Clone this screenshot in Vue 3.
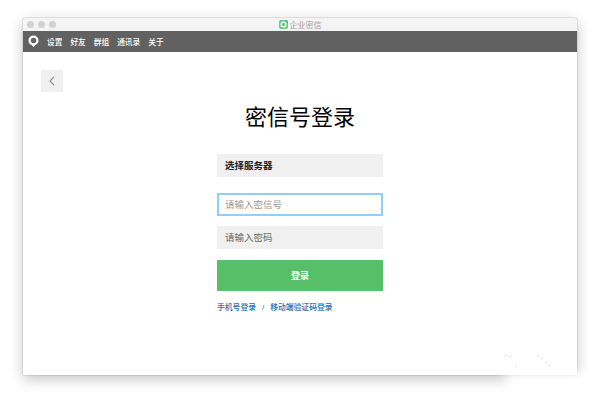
<script setup>
const menus = ["设置", "好友", "群组", "通讯录", "关于"];
const specks = [
  { left: "505px", top: "355px" },
  { left: "509px", top: "356px" },
  { left: "515px", top: "366px" },
  { left: "537px", top: "355px" },
  { left: "541px", top: "358px" },
  { left: "545px", top: "362px" },
  { left: "548px", top: "365px" },
];
</script>

<template>
  <div class="page">
    <div class="window">
      <div class="titlebar">
        <div class="lights">
          <span class="light"></span>
          <span class="light"></span>
          <span class="light"></span>
        </div>
        <div class="app-title">
          <svg class="app-icon" width="9" height="9" viewBox="0 0 9 9">
            <rect width="9" height="9" rx="2" fill="#5fcf7c" />
            <path d="M6 0h1a2 2 0 0 1 2 2v2z" fill="#4fa8e8" />
            <circle cx="4.5" cy="4.5" r="2.4" fill="none" stroke="#fff" stroke-width="1.3" />
          </svg>
          <span>企业密信</span>
        </div>
      </div>
      <div class="menubar">
        <svg class="logo" width="11" height="13" viewBox="0 0 11 13">
          <circle cx="5.5" cy="5.5" r="3.9" fill="none" stroke="#fff" stroke-width="2.2" />
          <path d="M3.6 9.5h3.8L5.5 12.2z" fill="#fff" />
        </svg>
        <span v-for="m in menus" :key="m" class="menu">{{ m }}</span>
      </div>
      <div class="content">
        <div class="back">
          <svg width="6" height="10" viewBox="0 0 6 10">
            <path d="M5 .8 1 5l4 4.2" fill="none" stroke="#8a8a8a" stroke-width="1.1" />
          </svg>
        </div>
        <div class="form">
          <h1 class="title">密信号登录</h1>
          <div class="field select">选择服务器</div>
          <input class="field input" type="text" placeholder="请输入密信号" />
          <input class="field password" type="text" placeholder="请输入密码" />
          <button class="submit">登录</button>
          <div class="links">
            <a>手机号登录</a>
            <span class="sep">/</span>
            <a>移动端验证码登录</a>
          </div>
        </div>
      </div>
    </div>
    <div class="watermark"></div>
    <span v-for="(s, i) in specks" :key="i" class="speck" :style="s"></span>
  </div>
</template>

<style scoped>
.page {
  position: relative;
  width: 600px;
  height: 402px;
  padding: 18px 23px 27px;
  box-sizing: border-box;
  background: #fff;
  overflow: hidden;
  font-family: "Liberation Sans", "Noto Sans CJK SC", sans-serif;
}

.window {
  height: 100%;
  display: flex;
  flex-direction: column;
  background: #fff;
  border-radius: 3px 3px 0 0;
  box-shadow: 0 0 1px rgba(0, 0, 0, 0.75), 0 4px 14px rgba(0, 0, 0, 0.24);
}

.titlebar {
  height: 13px;
  flex: none;
  display: flex;
  align-items: center;
  justify-content: center;
  position: relative;
  background: #f4f4f4;
  border-radius: 3px 3px 0 0;
}

.lights {
  position: absolute;
  left: 4px;
  top: 3px;
  display: flex;
  gap: 4px;
}

.light {
  width: 7px;
  height: 7px;
  border-radius: 50%;
  background: #d2d2d2;
}

.app-title {
  display: flex;
  align-items: center;
  gap: 2px;
  font-size: 8px;
  color: #a0a0a0;
}

.menubar {
  height: 21px;
  flex: none;
  display: flex;
  align-items: center;
  padding-left: 5px;
  background: #616161;
  color: #fff;
  font-size: 7.7px;
  font-weight: 500;
  gap: 8px;
}

.logo {
  margin-right: 0;
}

.content {
  flex: 1;
  padding: 18px 18px 0;
}

.back {
  width: 22px;
  height: 22px;
  display: flex;
  align-items: center;
  justify-content: center;
  background: #f0f0f0;
}

.form {
  width: 166px;
  margin: 13px auto 0 176px;
  display: flex;
  flex-direction: column;
}

.title {
  margin: 0 -20px;
  height: 26px;
  line-height: 26px;
  font-size: 22px;
  font-weight: 400;
  text-align: center;
  color: #000;
}

.field {
  box-sizing: border-box;
  width: 100%;
  border: none;
  outline: none;
  padding: 0 8px;
  font-family: inherit;
  font-size: 9.5px;
  border-radius: 0;
}

.select {
  height: 23px;
  margin-top: 23px;
  line-height: 23px;
  background: #f0f0f0;
  color: #222;
  font-weight: 700;
}

.input {
  height: 23px;
  margin-top: 16px;
  background: #fff;
  border: 2px solid #8fd0fb;
  padding-left: 6px;
}

.input::placeholder {
  color: #999;
}

.password {
  height: 23px;
  margin-top: 10px;
  background: #f0f0f0;
}

.password::placeholder {
  color: #6a6a6a;
}

.submit {
  height: 31px;
  margin-top: 11px;
  border: none;
  background: #57bf68;
  color: #fff;
  font-family: inherit;
  font-size: 9px;
  font-weight: 700;
}

.links {
  margin-top: 11px;
  display: flex;
  align-items: center;
  gap: 6px;
  font-size: 7.8px;
  font-weight: 500;
  line-height: 12px;
  color: #1a6db5;
}

.sep {
  color: #2f6a9f;
}

/* soft white smear over the bottom right corner of the shot */
.watermark {
  position: absolute;
  left: 505px;
  top: 372px;
  width: 110px;
  height: 40px;
  background: #fff;
  filter: blur(6px);
}

.speck {
  position: absolute;
  width: 2px;
  height: 1px;
  background: #e2e2e2;
}
</style>

<style>
html,
body {
  margin: 0;
  background: #fff;
}
</style>
